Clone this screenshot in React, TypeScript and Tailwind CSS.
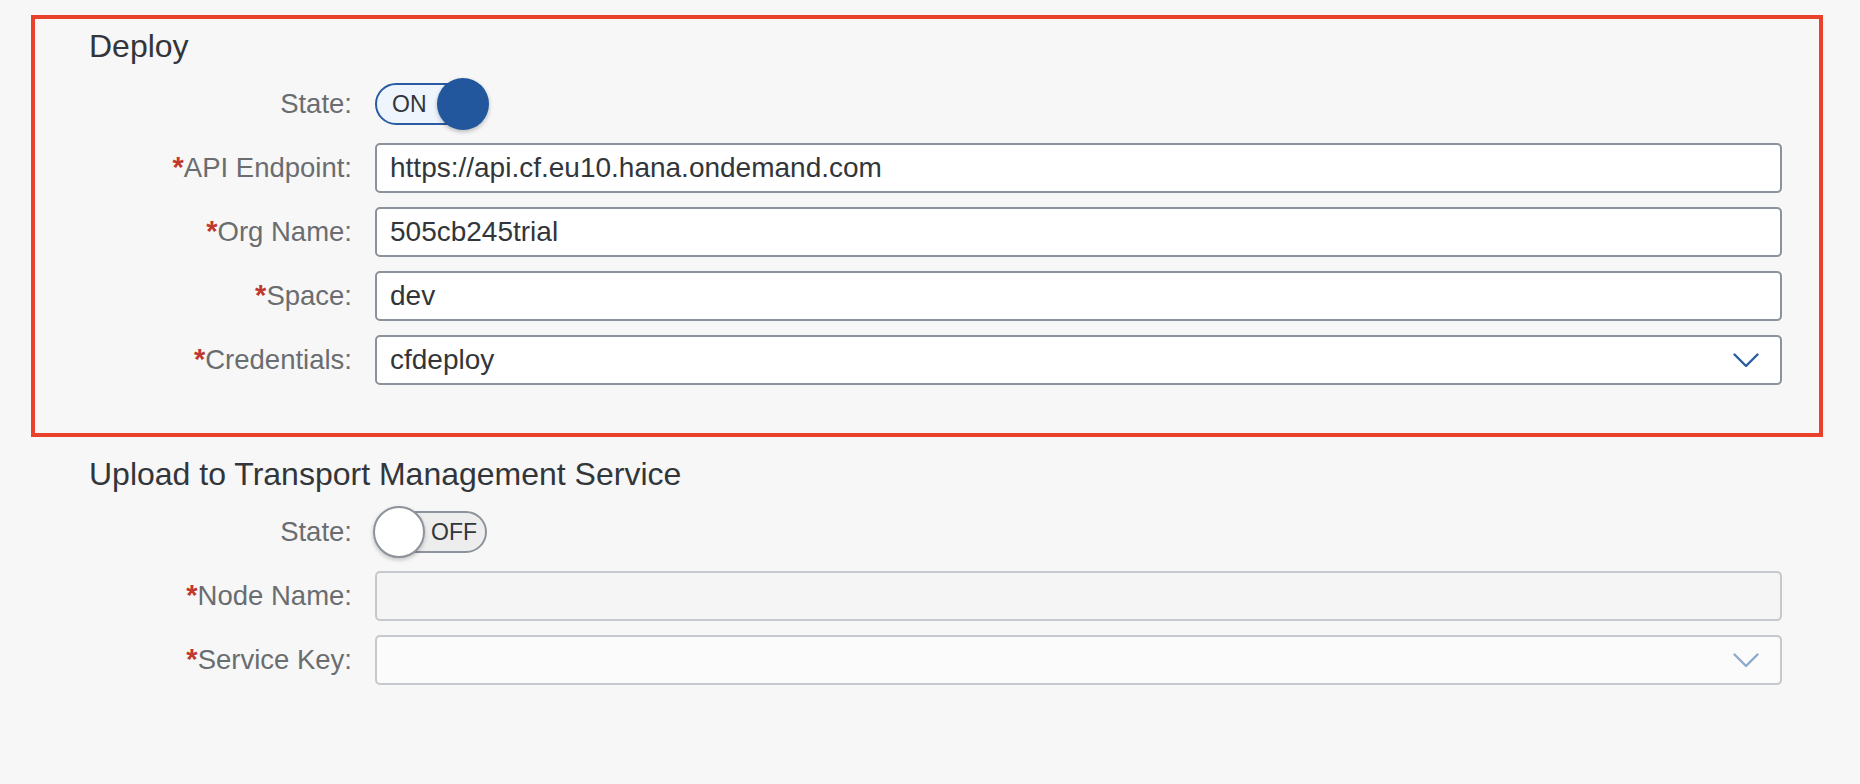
import React from "react";

const FONT = { fontFamily: '"Liberation Sans", Arial, sans-serif' };

function Chevron({ color }: { color: string }) {
  return (
    <svg width="26" height="15" viewBox="0 0 26 15" fill="none">
      <path d="M1.5 1.5 L13 13 L24.5 1.5" stroke={color} strokeWidth="2.4" strokeLinecap="round" strokeLinejoin="round" />
    </svg>
  );
}

function Toggle({ on }: { on: boolean }) {
  if (on) {
    return (
      <div className="relative w-[112px] h-[42px]">
        <div className="absolute inset-0 rounded-full border-2 border-[#2a5ca3] bg-[#eef5fd]" />
        <span className="absolute left-[17px] top-0 h-[42px] leading-[42px] text-[23px] text-[#32363a]">ON</span>
        <div className="absolute right-[-2px] top-[-5px] w-[52px] h-[52px] rounded-full bg-[#22569d] shadow-[0_2px_4px_rgba(0,0,0,0.25)]" />
      </div>
    );
  }
  return (
    <div className="relative w-[112px] h-[42px]">
      <div className="absolute inset-0 rounded-full border-2 border-[#8d939a] bg-[#ededed]" />
      <span className="absolute left-[56px] top-0 h-[42px] leading-[42px] text-[23px] text-[#32363a]">OFF</span>
      <div className="absolute left-[-2px] top-[-5px] w-[52px] h-[52px] rounded-full bg-white border-2 border-[#8d939a] shadow-[0_2px_4px_rgba(0,0,0,0.22)]" />
    </div>
  );
}

function Label({ text, required }: { text: string; required?: boolean }) {
  return (
    <div className="w-[263px] shrink-0 text-right text-[27.5px] text-[#6a6d70] whitespace-nowrap">
      {required && <span className="text-[#c0392e] font-bold text-[29px]">*</span>}
      {text}
    </div>
  );
}

function Row({ children }: { children: React.ReactNode }) {
  return <div className="flex items-center h-[50px] gap-[23px]">{children}</div>;
}

function Input({ value, select, disabled, bg }: { value?: string; select?: boolean; disabled?: boolean; bg?: string }) {
  return (
    <div
      className={
        "flex-1 h-[50px] rounded-[5px] border-2 flex items-center pl-[13px] pr-[21px] " +
        (disabled ? "border-[#c5c8cc] " : "border-[#8b929b] bg-white ")
      }
      style={disabled ? { backgroundColor: bg } : undefined}
    >
      <span className="flex-1 text-[28px] text-[#32363a] whitespace-nowrap">{value}</span>
      {select && <Chevron color={disabled ? "#8ea8cf" : "#2a5ca3"} />}
    </div>
  );
}

export default function App() {
  return (
    <div className="w-[1860px] h-[784px] bg-[#f7f7f7] overflow-hidden" style={FONT}>
      <div className="pt-[15px]">
        <div className="ml-[31px] mr-[37px] border-4 border-[#e9412a] pl-[54px] pr-[37px] pt-[7px] pb-[48px]">
          <div className="h-[40px] leading-[40px] text-[32px] text-[#32363a]">Deploy</div>
          <div className="mt-[13px] flex flex-col gap-[14px]">
            <Row>
              <Label text="State:" />
              <Toggle on />
            </Row>
            <Row>
              <Label text="API Endpoint:" required />
              <Input value="https://api.cf.eu10.hana.ondemand.com" />
            </Row>
            <Row>
              <Label text="Org Name:" required />
              <Input value="505cb245trial" />
            </Row>
            <Row>
              <Label text="Space:" required />
              <Input value="dev" />
            </Row>
            <Row>
              <Label text="Credentials:" required />
              <Input value="cfdeploy" select />
            </Row>
          </div>
        </div>
        <div className="pl-[89px] pr-[78px] pt-[17px]">
          <div className="h-[40px] leading-[40px] text-[32px] text-[#32363a]">Upload to Transport Management Service</div>
          <div className="mt-[13px] flex flex-col gap-[14px]">
            <Row>
              <Label text="State:" />
              <Toggle on={false} />
            </Row>
            <Row>
              <Label text="Node Name:" required />
              <Input disabled bg="#f5f5f5" />
            </Row>
            <Row>
              <Label text="Service Key:" required />
              <Input disabled select bg="#fbfbfb" />
            </Row>
          </div>
        </div>
      </div>
    </div>
  );
}
